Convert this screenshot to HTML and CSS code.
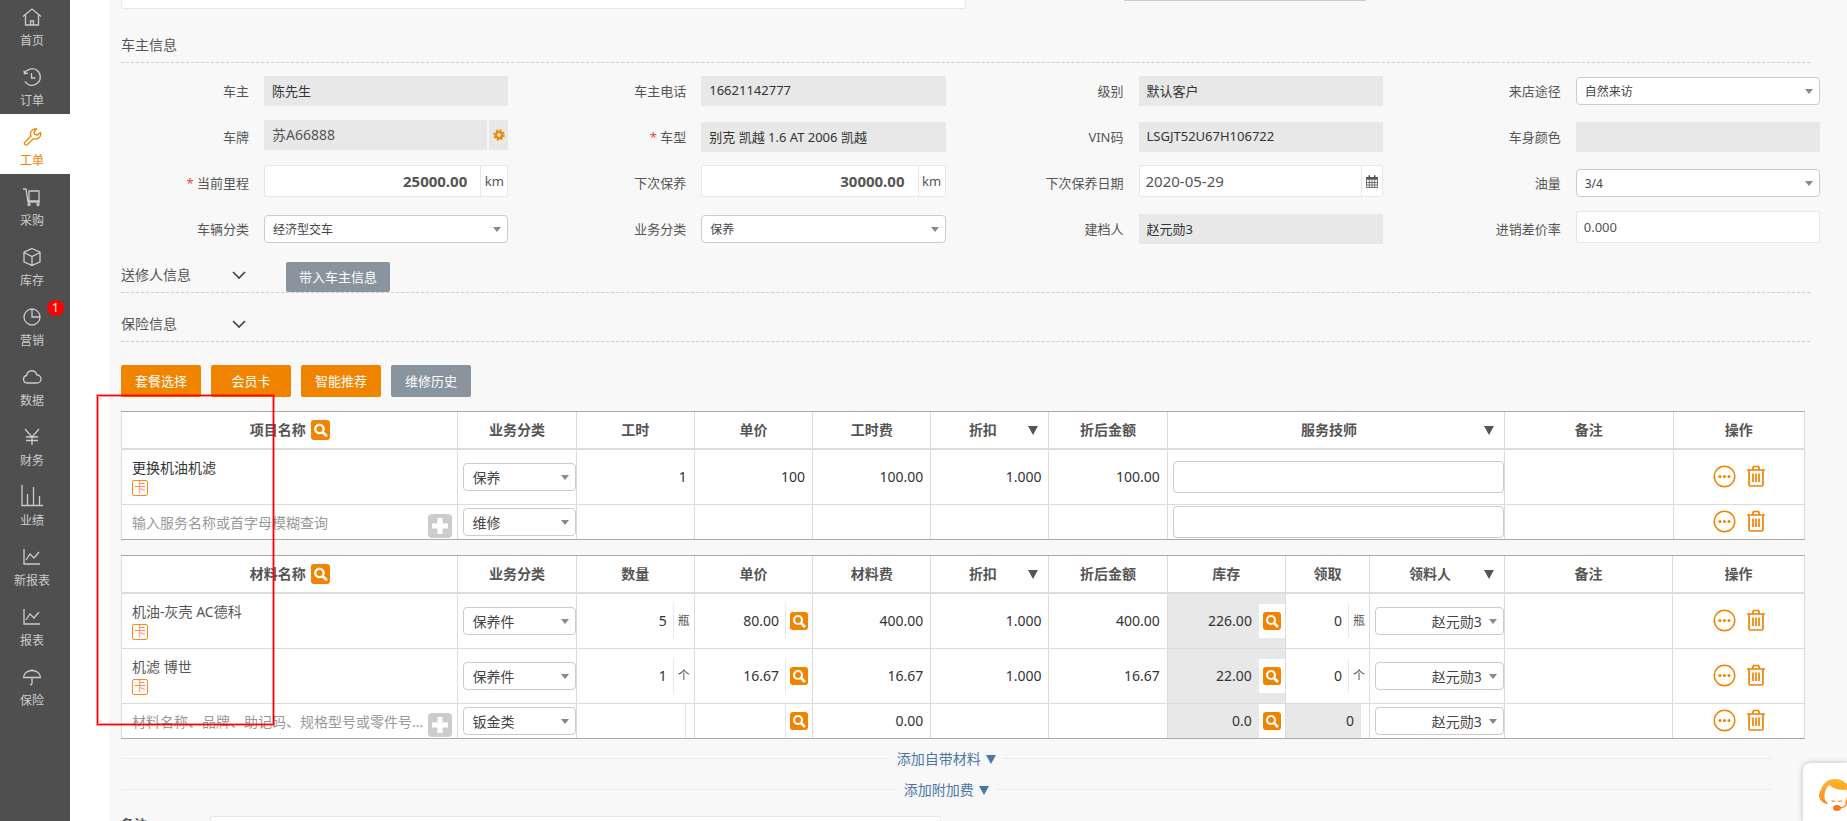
FILE: index.html
```html
<!DOCTYPE html>
<html lang="zh-CN">
<head>
<meta charset="utf-8">
<title>工单</title>
<link rel="stylesheet" href="styles.css">
</head>
<body>
<svg class="defs" aria-hidden="true">
  <symbol id="i-search" viewBox="0 0 18 18"><circle cx="8" cy="8" r="4" fill="none" stroke="#fff" stroke-width="2.2"/><path d="M11 11l4 4" stroke="#fff" stroke-width="2.6"/></symbol>
  <symbol id="i-plus" viewBox="0 0 24 24"><path d="M12 4v16M4 12h16" stroke="#fff" stroke-width="5"/></symbol>
  <symbol id="i-more" viewBox="0 0 24 24"><circle cx="12" cy="12" r="10.7" fill="none" stroke="currentColor" stroke-width="1.5"/><g fill="currentColor"><circle cx="7.3" cy="12" r="1.6"/><circle cx="12" cy="12" r="1.6"/><circle cx="16.7" cy="12" r="1.6"/></g></symbol>
  <symbol id="i-trash" viewBox="0 0 18 22"><path d="M0 5h18M2 5v14.5q0 1.5 1.500 1.500h11q1.500 0 1.500-1.500V5M5.500 4.500L6.500 1.500h5l1 3M6 8.500v8.500M9 8.500v8.500M12 8.500v8.500" fill="none" stroke="currentColor" stroke-width="1.700"/></symbol>
  <symbol id="i-chev" viewBox="0 0 14 9"><path d="M1 1l6 6 6-6" fill="none" stroke="#444" stroke-width="1.700"/></symbol>
  <symbol id="i-chart" viewBox="0 0 20 20"><path d="M2 2v15h16M4 13l4-6 4 4 5-6"/></symbol>
</svg>

<div class="app">
  <nav class="side">
    <a class="item" href="#"><svg viewBox="0 0 20 20"><path d="M1 9.500L10 2l9 7.500M3.500 8v10h13V8M8.500 18v-4h3v4"/></svg>首页</a>
    <a class="item" href="#"><svg viewBox="0 0 20 20"><path d="M2.500 6.500A8.300 8.300 0 1 1 3 14.500M2 3.500l.5 3.300 3.500-.6M9.500 6v5h4"/></svg>订单</a>
    <a class="item active" href="#"><svg viewBox="0 0 20 20"><path d="M14.500 2a5 5 0 0 0-5.500 7L2.500 15.500a2 2 0 0 0 2.500 2.500L11.500 11.500A5 5 0 0 0 18.500 5.500L15.500 8 12.500 7.500 12 5z"/></svg>工单</a>
    <a class="item" href="#"><svg viewBox="0 0 20 20"><path d="M1 2h3l2 13h12M7 4h10v10H7z"/><circle cx="7" cy="17.500" r="1"/><circle cx="16" cy="17.500" r="1"/></svg>采购</a>
    <a class="item" href="#"><svg viewBox="0 0 20 20"><path d="M10 1.500l8 3.700v9.600l-8 3.700-8-3.700V5.200zM2 5.500l8 4 8-4M10 9.500v9"/></svg>库存</a>
    <a class="item" href="#"><svg viewBox="0 0 20 20"><circle cx="10" cy="10" r="8"/><path d="M10 2v8h8"/></svg>营销<span class="badge">1</span></a>
    <a class="item" href="#"><svg viewBox="0 0 20 20"><path d="M5 16a3.800 3.800 0 0 1-.4-7.500C5.500 2.500 13 2 15 8a4 4 0 0 1 0 8z"/></svg>数据</a>
    <a class="item" href="#"><svg viewBox="0 0 20 20"><path d="M3 2l7 8 7-8M10 10v8M4 10h12M4 13.500h12"/></svg>财务</a>
    <a class="item" href="#"><svg class="big" viewBox="0 0 22 22"><path d="M1 0v20.500h21M6.500 20V9M12.500 20V2M18.500 20V11"/></svg>业绩</a>
    <a class="item" href="#"><svg><use href="#i-chart"/></svg>新报表</a>
    <a class="item" href="#"><svg><use href="#i-chart"/></svg>报表</a>
    <a class="item" href="#"><svg viewBox="0 0 20 20"><path d="M1.500 10.500a8.500 7 0 0 1 17 0zM10 2v1.500M10 10.500V16q0 2-2 1.500"/></svg>保险</a>
  </nav>

  <main class="main">
    <div class="clipped"><input class="box prev-text" aria-label="描述"><div class="prev-select"></div></div>

    <section>
      <div class="head first"><h2>车主信息</h2></div>
      <div class="form">
        <div class="field"><label for="f1">车主</label><input id="f1" class="gray" value="陈先生" readonly></div>
        <div class="field"><label for="f2">车主电话</label><input id="f2" class="gray" value="16621142777" readonly></div>
        <div class="field"><label for="f3">级别</label><input id="f3" class="gray" value="默认客户" readonly></div>
        <div class="field"><label for="f4">来店途径</label><span class="sel"><select id="f4"><option>自然来访</option></select></span></div>

        <div class="field"><label for="f5">车牌</label><span class="group plate raised"><input id="f5" class="gray" value="苏A66888" readonly><button class="gear" aria-label="设置"><svg viewBox="0 0 12 12"><circle cx="6" cy="6" r="3.100" fill="none" stroke="currentColor" stroke-width="2.400"/><circle cx="6" cy="6" r="4.800" fill="none" stroke="currentColor" stroke-width="1.800" stroke-dasharray="1.900 1.870"/></svg></button></span></div>
        <div class="field"><label for="f6"><i>*</i> 车型</label><input id="f6" class="gray" value="别克 凯越 1.6 AT 2006 凯越" readonly></div>
        <div class="field"><label for="f7">VIN码</label><input id="f7" class="gray" value="LSGJT52U67H106722" readonly></div>
        <div class="field"><label for="f8">车身颜色</label><input id="f8" class="gray" readonly></div>

        <div class="field"><label for="f9"><i>*</i> 当前里程</label><span class="group box raised"><input id="f9" class="mile" value="25000.00"><span class="addon">km</span></span></div>
        <div class="field"><label for="f10">下次保养</label><span class="group box raised"><input id="f10" class="mile" value="30000.00"><span class="addon">km</span></span></div>
        <div class="field"><label for="f11">下次保养日期</label><span class="group box raised"><input id="f11" class="date" value="2020-05-29"><button class="addon cal" aria-label="选择日期"><svg viewBox="0 0 12 13"><path d="M.5 2.500h11v10H.5zM3.300 5v7.500M6 5v7.500M8.700 5v7.500M.5 7.500h11M.5 10h11" fill="none" stroke="currentColor" stroke-width=".8"/><path d="M.3 2h11.400v2.800H.3zM2.500.3h1.500v2H2.500zM8 .3h1.500v2H8z" fill="currentColor"/></svg></button></span></div>
        <div class="field"><label for="f12">油量</label><span class="sel"><select id="f12"><option>3/4</option></select></span></div>

        <div class="field"><label for="f13">车辆分类</label><span class="sel"><select id="f13"><option>经济型交车</option></select></span></div>
        <div class="field"><label for="f14">业务分类</label><span class="sel"><select id="f14"><option>保养</option></select></span></div>
        <div class="field"><label for="f15">建档人</label><input id="f15" class="gray" value="赵元勋3" readonly></div>
        <div class="field"><label for="f16">进销差价率</label><input id="f16" class="box rate raised" value="0.000"></div>
      </div>
    </section>

    <div class="head sender"><h2>送修人信息</h2><button class="chev" aria-label="展开"><svg><use href="#i-chev"/></svg></button><button class="btn slate bring">带入车主信息</button></div>
    <div class="head insure"><h2>保险信息</h2><button class="chev" aria-label="展开"><svg><use href="#i-chev"/></svg></button></div>

    <div class="toolbar">
      <button class="btn orange">套餐选择</button><button class="btn orange">会员卡</button><button class="btn orange">智能推荐</button><button class="btn slate">维修历史</button>
    </div>

    <table class="grid">
      <colgroup><col class="c20"><col class="c7"><col class="c7"><col class="c7"><col class="c7"><col class="c7"><col class="c7"><col class="c20"><col class="c10"><col></colgroup>
      <thead><tr>
        <th><span class="th-name">项目名称<button class="search lg" aria-label="搜索项目"><svg><use href="#i-search"/></svg></button></span></th>
        <th>业务分类</th><th>工时</th><th>单价</th><th>工时费</th>
        <th><span class="th-drop"><span>折扣</span><b class="tri"></b></span></th><th>折后金额</th>
        <th><span class="th-drop"><span>服务技师</span><b class="tri"></b></span></th><th>备注</th><th>操作</th>
      </tr></thead>
      <tbody>
        <tr class="tall">
          <td class="name dark">更换机油机滤<span class="card">卡</span></td>
          <td class="ctl"><span class="sel"><select aria-label="业务分类"><option>保养</option></select></span></td>
          <td class="num">1</td><td class="num">100</td><td class="num">100.00</td><td class="num">1.000</td><td class="num">100.00</td>
          <td class="ctl"><input class="tech" aria-label="服务技师"></td><td></td>
          <td class="ops"><button aria-label="更多"><svg class="more"><use href="#i-more"/></svg></button><button aria-label="删除"><svg class="trash"><use href="#i-trash"/></svg></button></td>
        </tr>
        <tr class="short">
          <td class="name"><span class="entry"><input placeholder="输入服务名称或首字母模糊查询" aria-label="项目名称"><button class="plus" aria-label="添加"><svg><use href="#i-plus"/></svg></button></span></td>
          <td class="ctl"><span class="sel"><select aria-label="业务分类"><option>维修</option></select></span></td>
          <td></td><td></td><td></td><td></td><td></td>
          <td class="ctl"><input class="tech" aria-label="服务技师"></td><td></td>
          <td class="ops"><button aria-label="更多"><svg class="more"><use href="#i-more"/></svg></button><button aria-label="删除"><svg class="trash"><use href="#i-trash"/></svg></button></td>
        </tr>
      </tbody>
    </table>

    <table class="grid">
      <colgroup><col class="c20"><col class="c7"><col class="c7"><col class="c7"><col class="c7"><col class="c7"><col class="c7"><col class="c7"><col class="c5"><col class="c8"><col class="c10"><col></colgroup>
      <thead><tr>
        <th><span class="th-name">材料名称<button class="search lg" aria-label="搜索材料"><svg><use href="#i-search"/></svg></button></span></th>
        <th>业务分类</th><th>数量</th><th>单价</th><th>材料费</th>
        <th><span class="th-drop"><span>折扣</span><b class="tri"></b></span></th><th>折后金额</th>
        <th>库存</th><th>领取</th><th><span class="th-drop"><span>领料人</span><b class="tri"></b></span></th><th>备注</th><th>操作</th>
      </tr></thead>
      <tbody>
        <tr class="tall">
          <td class="name">机油-灰壳 AC德科<span class="card">卡</span></td>
          <td class="ctl"><span class="sel"><select aria-label="业务分类"><option>保养件</option></select></span></td>
          <td><span class="cell"><span>5</span><em>瓶</em></span></td>
          <td><span class="cell"><span>80.00</span><em><button class="search" aria-label="查价"><svg><use href="#i-search"/></svg></button></em></span></td>
          <td class="num">400.00</td><td class="num">1.000</td><td class="num">400.00</td>
          <td class="stock"><span class="cell"><span>226.00</span><em><button class="search" aria-label="查库存"><svg><use href="#i-search"/></svg></button></em></span></td>
          <td><span class="cell"><span>0</span><em>瓶</em></span></td>
          <td class="ctl who"><span class="sel"><select aria-label="领料人"><option>赵元勋3</option></select></span></td><td></td>
          <td class="ops"><button aria-label="更多"><svg class="more"><use href="#i-more"/></svg></button><button aria-label="删除"><svg class="trash"><use href="#i-trash"/></svg></button></td>
        </tr>
        <tr class="tall">
          <td class="name">机滤 博世<span class="card">卡</span></td>
          <td class="ctl"><span class="sel"><select aria-label="业务分类"><option>保养件</option></select></span></td>
          <td><span class="cell"><span>1</span><em>个</em></span></td>
          <td><span class="cell"><span>16.67</span><em><button class="search" aria-label="查价"><svg><use href="#i-search"/></svg></button></em></span></td>
          <td class="num">16.67</td><td class="num">1.000</td><td class="num">16.67</td>
          <td class="stock"><span class="cell"><span>22.00</span><em><button class="search" aria-label="查库存"><svg><use href="#i-search"/></svg></button></em></span></td>
          <td><span class="cell"><span>0</span><em>个</em></span></td>
          <td class="ctl who"><span class="sel"><select aria-label="领料人"><option>赵元勋3</option></select></span></td><td></td>
          <td class="ops"><button aria-label="更多"><svg class="more"><use href="#i-more"/></svg></button><button aria-label="删除"><svg class="trash"><use href="#i-trash"/></svg></button></td>
        </tr>
        <tr class="short">
          <td class="name"><span class="entry"><input placeholder="材料名称、品牌、助记码、规格型号或零件号..." aria-label="材料名称"><button class="plus" aria-label="添加"><svg><use href="#i-plus"/></svg></button></span></td>
          <td class="ctl"><span class="sel"><select aria-label="业务分类"><option>钣金类</option></select></span></td>
          <td><span class="cell"><span></span><em></em></span></td>
          <td><span class="cell"><span></span><em><button class="search" aria-label="查价"><svg><use href="#i-search"/></svg></button></em></span></td>
          <td class="num">0.00</td><td></td><td></td>
          <td class="stock"><span class="cell"><span>0.0</span><em><button class="search" aria-label="查库存"><svg><use href="#i-search"/></svg></button></em></span></td>
          <td class="stock"><span class="cell"><span>0</span><em></em></span></td>
          <td class="ctl who"><span class="sel"><select aria-label="领料人"><option>赵元勋3</option></select></span></td><td></td>
          <td class="ops"><button aria-label="更多"><svg class="more"><use href="#i-more"/></svg></button><button aria-label="删除"><svg class="trash"><use href="#i-trash"/></svg></button></td>
        </tr>
      </tbody>
    </table>

    <div class="adds">
      <div class="add"><a href="#">添加自带材料 <b class="tri"></b></a></div>
      <div class="add"><a href="#">添加附加费 <b class="tri"></b></a></div>
    </div>
    <div class="remark"><label for="rm">备注</label><textarea id="rm" class="box"></textarea></div>
  </main>
</div>

<div class="highlight"></div>
<button class="chat" aria-label="在线客服"><svg viewBox="0 0 38 38">
  <defs><linearGradient id="hair" x1="0" y1="0" x2="0" y2="1"><stop offset="0" stop-color="#ffb62e"/><stop offset="1" stop-color="#fb8a1e"/></linearGradient></defs>
  <path d="M8 25C3 24 0 20 0 16.500 0 13 2 11 2.500 9.500 5 3 10 0 16 0s12 3 14 9.500c1 2 2 3.500 2 7S29.500 24 27 25l-1-1.500c2-3 2.500-8 1.500-13-7 1-13-.5-17.500-4.500C6.500 9.500 5.500 14 5.500 17s.5 5.500 3.500 7z" fill="url(#hair)"/>
  <path d="M12.500 21.500q2 1.500 4 .5M19 22q2.500 1 4-.5M29 22q-2 7-9 7" fill="none" stroke="#f9922a" stroke-width="1.300"/>
  <ellipse cx="18" cy="29" rx="4" ry="3" fill="#f57c1f"/>
</svg></button>
</body>
</html>
```

FILE: styles.css
```css
* { box-sizing: border-box; }

body {
  margin: 0;
  height: 100vh;
  overflow: hidden;
  background: #fff;
  color: #555;
  font: 14px/20px "Noto Sans", "Noto Sans CJK SC", sans-serif;
}

input, select, button, textarea {
  margin: 0;
  padding: 0;
  border: 0;
  border-radius: 0;
  background: none;
  color: inherit;
  font: inherit;
  min-width: 0;
  outline: 0;
}

button { cursor: pointer; }
svg { display: block; }
.defs { position: absolute; width: 0; height: 0; }

.app { display: flex; min-height: 100vh; }

/* sidebar */
.side { flex: 0 0 70px; margin-right: 39px; background: #4f4f4f; }

.item {
  position: relative;
  display: flex;
  flex-direction: column;
  align-items: center;
  justify-content: flex-end;
  gap: 6px;
  height: 60px;
  padding: 0 6px 5px 0;
  color: #ccc;
  font-size: 12px;
  line-height: 16px;
  text-decoration: none;
}
.item:first-child { height: 54px; }
.item svg { width: 20px; height: 20px; fill: none; stroke: currentColor; stroke-width: 1.3; }
.item svg.big { width: 22px; height: 22px; }
.item.active { background: #fff; color: #f08300; }

.badge {
  position: absolute;
  top: 6px;
  right: 6px;
  width: 17px;
  border-radius: 8px;
  background: #f00;
  color: #fff;
  text-align: center;
}

/* main column */
.main { flex: 1; min-width: 0; padding: 0 27px 0 12px; background: #f8f8f8; }

.box { border: 1px solid #e8e8e8; border-radius: 2px; background: #fff; }

.clipped { display: flex; height: 9px; gap: 158px; align-items: flex-start; }
.prev-text { flex: 0 0 calc(50% - 5px); height: 9px; border-top: 0; }
.prev-select { flex: 0 0 242px; height: 1px; background: #ccc; }

.head {
  display: flex;
  align-items: flex-end;
  margin-right: 10px;
  border-bottom: 1px dashed #ccc;
}
.head h2 { width: 111px; margin: 0; font-size: 14px; font-weight: 400; line-height: 34px; }
.head.first { padding-top: 19px; }
.head.sender { padding-top: 6px; }
.head.insure { padding-top: 14px; }
.chev { width: 54px; height: 34px; }
.chev svg { width: 14px; height: 9px; }

.btn { height: 32px; border-radius: 2px; color: #fff; font-size: 13px; }
.orange { background: #f08300; }
.slate { background: #8a949e; }
.bring { width: 104px; height: 30px; }

/* owner form */
.form { display: grid; grid-template-columns: repeat(4, minmax(0, 1fr)); column-gap: 50px; padding-top: 5px; }
.field { display: flex; align-items: center; gap: 15px; height: 46px; font-size: 13px; }
.field label { flex: 0 0 128px; text-align: right; }
.field label i { color: #e64545; font-style: normal; }
.field label + * { flex: 1; }

.gray { height: 30px; padding: 0 8px 2px; border: 0; background: #e8e8e8; color: #333; }
.group { display: flex; min-width: 0; }
.raised { margin-bottom: 4px; }
.group.box, .rate { height: 32px; }
.group input { flex: 1; }
.rate { padding: 0 7px; }
.plate { gap: 2px; color: #555; font-size: 14px; }
.plate .gray { color: inherit; }
.gear { width: 19px; background: #e8e8e8; color: #f08300; }
.gear svg { width: 12px; height: 12px; margin: 0 auto; }
.mile { padding-right: 13px; font-size: 15px; font-weight: 700; text-align: right; }
.date { padding-left: 6px; font-size: 15px; }
.addon {
  display: flex;
  align-items: center;
  justify-content: center;
  width: 27px;
  border-left: 1px solid #e8e8e8;
}
.cal { width: 21px; }
.cal svg { width: 12px; height: 13px; }

/* drop-downs */
.sel { position: relative; display: block; }
.sel select {
  display: block;
  width: 100%;
  height: 28px;
  padding: 1px 24px 0 8px;
  border: 1px solid #ccc;
  border-radius: 4px;
  background: #fff;
  color: #444;
  appearance: none;
}
.field .sel { font-size: 12px; }
.sel::after {
  content: "";
  position: absolute;
  top: 12px;
  right: 7px;
  border: 4px solid transparent;
  border-top: 5px solid #888;
  border-bottom: 0;
}

.toolbar { display: flex; gap: 10px; padding: 23px 0 14px; }
.toolbar .btn { width: 80px; }

/* item tables: the last column takes what is left */
.grid {
  width: calc(100% - 15px);
  margin-bottom: 15px;
  table-layout: fixed;
  border-collapse: separate;
  border-spacing: 0;
  border: 1px solid #a9a9a9;
  border-width: 1px 0;
  background: #fff;
}
.c20 { width: 20.04%; }
.c10 { width: 10%; }
.c8 { width: 8%; }
.c7 { width: 7.02%; }
.c5 { width: 5%; }

.grid th, .grid td { padding: 0; border-right: 1px solid #dcdcdc; }
.grid th:first-child, .grid td:first-child { border-left: 1px solid #dcdcdc; }
.grid th { height: 38px; border-bottom: 2px solid #dcdcdc; font-weight: 700; }
.tall td { height: 55px; border-bottom: 1px solid #dcdcdc; }
.short td { height: 34px; }

.th-name { display: flex; align-items: center; justify-content: center; gap: 5px; }
.th-drop { display: flex; align-items: center; padding: 0 10px 0 6px; }
.th-drop span { flex: 1; }
.tri {
  display: inline-block;
  border: 5px solid transparent;
  border-top: 9px solid currentColor;
  border-bottom: 0;
}

.search { display: block; width: 18px; height: 18px; border-radius: 3px; background: #f08300; }
.search svg { width: 100%; height: 100%; }
.search.lg { width: 19px; height: 20px; }

.grid .name { padding-left: 10px; }
.grid .dark { color: #333; }
.card {
  display: block;
  width: 16px;
  height: 16px;
  margin-top: 2px;
  border: 1px solid #ff8a1c;
  border-radius: 2px;
  color: #ff8a5c;
  font-size: 12px;
  line-height: 13px;
  text-align: center;
}
.entry { display: flex; align-items: center; height: 34px; padding-right: 5px; }
.entry input { flex: 1; height: 28px; text-overflow: ellipsis; }
.entry input::placeholder { color: #999; opacity: 1; }
.plus { align-self: flex-end; width: 24px; height: 24px; margin-bottom: 1px; border-radius: 4px; background: #ccc; }
.plus svg { width: 24px; height: 24px; }

.grid .ctl { padding-left: 5px; }
.tech { display: block; width: 100%; height: 32px; border: 1px solid #ccc; border-radius: 4px; background: #fff; }
.who select { text-align: right; text-align-last: right; padding-right: 21px; }

.grid .num { padding-right: 7px; text-align: right; color: #333; }
.cell { display: flex; height: 34px; line-height: 34px; color: #333; }
.cell span { flex: 1; padding-right: 6px; text-align: right; }
.cell em {
  display: flex;
  align-items: center;
  min-width: 9px;
  padding: 0 4px;
  border-left: 1px solid #e8e8e8;
  background: #fff;
  color: #555;
  font-size: 12px;
  font-style: normal;
}
.stock { background: #e8e8e8; }

.grid .ops { padding-bottom: 2px; color: #f08300; text-align: center; }
.ops button { display: inline-block; vertical-align: middle; }
.ops button + button { margin-left: 11px; }
.more { width: 23px; height: 23px; }
.trash { width: 18px; height: 22px; }

/* extra rows */
.adds { margin: -11px 48px 0 0; }
.add { display: flex; align-items: center; gap: 7px; height: 31px; }
.add::before, .add::after { content: ""; flex: 1; height: 1px; background: #ececec; }
.add a { color: #4a77a4; text-decoration: none; }
.add .tri { margin-left: 2px; }

.remark { display: flex; align-items: flex-start; height: 16px; padding-top: 11px; }
.remark label { flex: 0 0 89px; font-size: 13px; font-weight: 700; line-height: 16px; }
.remark textarea { width: 731px; height: 60px; resize: none; }

/* overlays */
.highlight {
  position: absolute;
  top: 395px;
  left: 97px;
  width: 177px;
  height: 330px;
  border: 1px solid #f00;
  box-shadow: 0 0 0 1px rgba(255, 0, 0, .4), inset 0 0 0 1px rgba(255, 0, 0, .4);
  pointer-events: none;
}
.chat {
  position: fixed;
  right: 0;
  bottom: 0;
  width: 44px;
  height: 58px;
  padding-left: 16px;
  overflow: hidden;
  border-radius: 8px 0 0 0;
  background: #fff;
  box-shadow: 0 0 6px rgba(0, 0, 0, .25);
}
.chat svg { width: 38px; height: 38px; margin-top: 12px; }
```
